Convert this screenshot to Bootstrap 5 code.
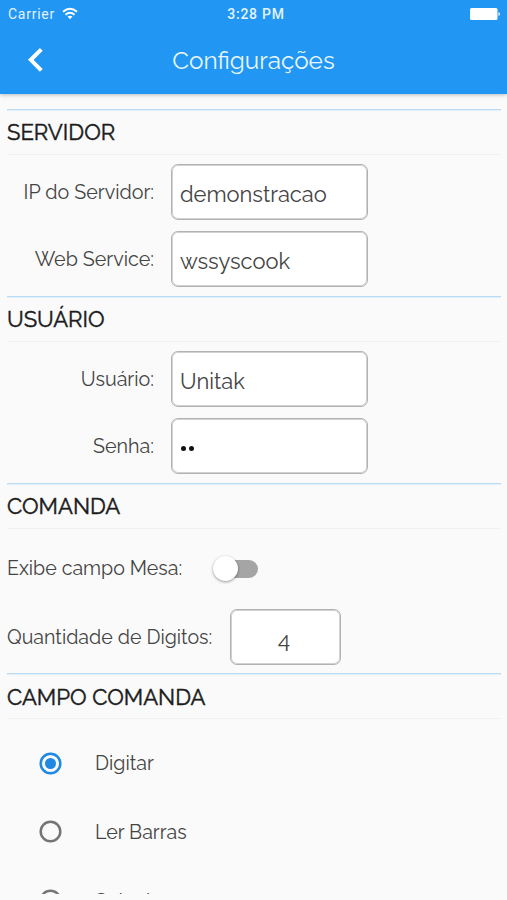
<!DOCTYPE html>
<html lang="pt-BR">
<head>
<meta charset="utf-8">
<meta name="viewport" content="width=device-width, initial-scale=1">
<title>Configurações</title>
<link rel="stylesheet" href="https://cdn.jsdelivr.net/npm/bootstrap@5.3.0/dist/css/bootstrap.min.css">
<style>
html, body { height: 100%; overflow: hidden; }
body { background: #fafafa; color: #444; font-family: Raleway, Lato, sans-serif; font-size: 19.6px; line-height: 24px; }
.app-screen { height: 900px; }
.app-header { height: 94px; background: #2196f3; box-shadow: 0 1px 4px rgba(0,0,0,.25); z-index: 1; }
.status-bar { height: 28px; padding: 0 7px 0 8px; font: 14px/28px Roboto, sans-serif; color: #e3f3ff; }
.status-bar > div { flex: 1 1 0; }
.clock { letter-spacing: .75px; font-weight: 500; font-size: 14px; padding-left: 4px; }
.carrier { letter-spacing: .75px; }
.wifi { margin-left: 7px; margin-bottom: 2px; }
.title-bar { height: 65px; padding: 0 27px; }
.page-title { font-size: 24.3px; line-height: 30px; color: #e9f6ff; font-weight: 400; }
.side-slot { width: 20px; margin-bottom: 1px; }
.settings { height: 800px; padding: 15px 6px 0 7px; }
.group { border-top: 1px solid #b9dcf6; box-shadow: inset 0 1px #e3f0fa; height: 187px; padding-top: 1px; }
.group-comanda { height: 190px; }
.group-title { height: 44px; border-bottom: 1px solid #f0f0f0; font-size: 22.1px; line-height: 43px; font-weight: 400; color: #1c1c1c; -webkit-text-stroke: .45px #1c1c1c; }
.group:last-child .group-title { line-height: 44px; }
.fields { padding-top: 9px; gap: 11px; }
.field-label { width: 147px; margin-right: 17px; font-size: 19.7px; }
.field-box.form-control { width: 197px; height: 56px; border: 1px solid #b2b2b2; box-shadow: inset 0 0 0 1px #d2d2d2; border-radius: 7px; padding: 4px 8px 0; font-size: 21.9px; color: #444; background: #fff; }
.field-box.digits { width: 111px; padding: 12px 8px 0 5px; font-variant-numeric: lining-nums; }
.digits-label { width: 223px; padding-top: 2px; }
.field-box.password { color: #111; padding-top: 4px; }
.dot { width: 5px; height: 5px; border-radius: 50%; background: #111; margin-right: 3px; }
.dot:first-child { margin-left: 1px; }
.switch-row { height: 80px; padding-bottom: 1px; }
.switch-label { width: 206px; }
.toggle { width: 45px; height: 26px; }
.toggle-track { width: 41px; height: 18px; border-radius: 9px; background: #a5a5a5; margin-left: 4px; }
.toggle-knob { width: 25px; height: 25px; border-radius: 50%; background: #fff; top: 0; left: 0; box-shadow: 0 1px 3px rgba(0,0,0,.4); }
.options { padding-top: 10px; }
.option { height: 68.5px; padding-left: 32px; gap: 33px; }
.option span { padding-top: 2px; }
.option:last-child span { padding-top: 4px; }
</style>
</head>
<body>
<main class="app-screen d-flex flex-column">
  <header class="app-header flex-shrink-0 position-relative">
    <div class="status-bar d-flex align-items-center">
      <div class="d-flex align-items-center"><span class="carrier">Carrier</span>
        <svg class="wifi" width="16" height="13" viewBox="0 0 16 13" fill="none" stroke="#fff" stroke-width="1.9"><path d="M1 4.8Q8-1.5 15 4.8M3.5 7.7Q8 3.8 12.5 7.7"/><path d="M5.5 9.6Q8 7.8 10.5 9.6L8 12.2Z" fill="#fff" stroke="none"/></svg></div>
      <div class="text-center clock">3:28 PM</div>
      <div class="d-flex justify-content-end"><svg width="30" height="14" viewBox="0 0 30 14" fill="#fff"><rect y="1" width="27.5" height="12" rx="1.5"/><path d="M28.5 5Q30 5.3 30 7T28.5 9Z"/></svg></div>
    </div>
    <div class="title-bar d-flex align-items-center justify-content-between">
      <svg class="side-slot" width="20" height="26" viewBox="0 0 20 26"><path d="M14.3 2.3 3.8 12.8l10.5 10.5" fill="none" stroke="#fff" stroke-width="4"/></svg>
      <h1 class="page-title mb-0">Configurações</h1>
      <span class="side-slot"></span>
    </div>
  </header>
  <div class="settings overflow-hidden">
    <section class="group">
      <h2 class="group-title mb-0">SERVIDOR</h2>
      <div class="fields d-flex flex-column">
        <div class="d-flex align-items-center"><label class="field-label text-end">IP do Servidor:</label><div class="field-box form-control d-flex align-items-center">demonstracao</div></div>
        <div class="d-flex align-items-center"><label class="field-label text-end">Web Service:</label><div class="field-box form-control d-flex align-items-center">wssyscook</div></div>
      </div>
    </section>
    <section class="group">
      <h2 class="group-title mb-0">USUÁRIO</h2>
      <div class="fields d-flex flex-column">
        <div class="d-flex align-items-center"><label class="field-label text-end">Usuário:</label><div class="field-box form-control d-flex align-items-center">Unitak</div></div>
        <div class="d-flex align-items-center"><label class="field-label text-end">Senha:</label><div class="field-box password form-control d-flex align-items-center"><span class="dot"></span><span class="dot"></span></div></div>
      </div>
    </section>
    <section class="group group-comanda">
      <h2 class="group-title mb-0">COMANDA</h2>
      <div class="switch-row d-flex align-items-center"><label class="switch-label">Exibe campo Mesa:</label><div class="toggle position-relative d-flex align-items-center"><span class="toggle-track"></span><span class="toggle-knob position-absolute"></span></div></div>
      <div class="d-flex align-items-center"><label class="digits-label">Quantidade de Digitos:</label><div class="field-box digits form-control d-flex align-items-center justify-content-center">4</div></div>
    </section>
    <section class="group">
      <h2 class="group-title mb-0">CAMPO COMANDA</h2>
      <div class="options">
        <div class="option d-flex align-items-center"><svg width="23" height="23" viewBox="0 0 23 23"><circle cx="11.5" cy="11.5" r="9.8" fill="none" stroke="#1e88e5" stroke-width="2.5"/><circle cx="11.5" cy="11.5" r="5.5" fill="#1e88e5"/></svg><span>Digitar</span></div>
        <div class="option d-flex align-items-center"><svg width="23" height="23" viewBox="0 0 23 23"><circle cx="11.5" cy="11.5" r="9.8" fill="none" stroke="#757575" stroke-width="2.5"/></svg><span>Ler Barras</span></div>
        <div class="option d-flex align-items-center"><svg width="23" height="23" viewBox="0 0 23 23"><circle cx="11.5" cy="11.5" r="9.8" fill="none" stroke="#757575" stroke-width="2.5"/></svg><span>Selecionar</span></div>
      </div>
    </section>
  </div>
</main>
<script src="https://cdn.jsdelivr.net/npm/bootstrap@5.3.0/dist/js/bootstrap.bundle.min.js"></script>
</body>
</html>
